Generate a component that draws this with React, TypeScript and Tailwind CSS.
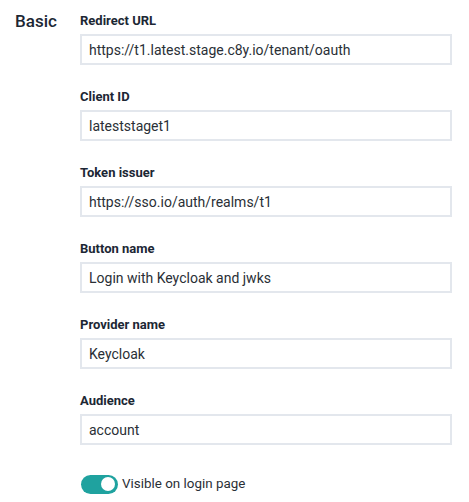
import { useState } from "react";

const fields = [
  { label: "Redirect URL", value: "https://t1.latest.stage.c8y.io/tenant/oauth" },
  { label: "Client ID", value: "lateststaget1" },
  { label: "Token issuer", value: "https://sso.io/auth/realms/t1" },
  { label: "Button name", value: "Login with Keycloak and jwks" },
  { label: "Provider name", value: "Keycloak" },
  { label: "Audience", value: "account" },
];

export default function App() {
  const [visible, setVisible] = useState(true);

  return (
    <div className="flex bg-white min-h-[502px] w-[469px] text-[#1c2734] font-['Roboto',sans-serif]">
      {/* Section title */}
      <div className="w-[80px] pl-[15px] pt-[11px]">
        <h2 className="text-[17px] leading-[20px] font-medium">Basic</h2>
      </div>

      {/* Fields */}
      <div className="w-[372px] pt-[13px]">
        {fields.map((f) => (
          <div key={f.label} className="mb-[24px]">
            <label className="block text-[13px] leading-[16px] font-bold mb-[5px]">{f.label}</label>
            <input
              type="text"
              defaultValue={f.value}
              className="block w-full h-[31px] px-[7px] border-2 border-[#e3e7ed] bg-white text-[14px] text-[#2a2f36] outline-none"
            />
          </div>
        ))}

        <label className="flex items-center gap-[4px] pl-[1px] pt-[5px] cursor-pointer">
          <button
            type="button"
            onClick={() => setVisible(!visible)}
            className={`relative w-[37px] h-[19px] rounded-full transition-colors ${visible ? "bg-[#1fa29f]" : "bg-[#c6ccd4]"}`}
          >
            <span
              className={`absolute top-[2.5px] w-[14px] h-[14px] rounded-full bg-white transition-all ${visible ? "left-[20px]" : "left-[3px]"}`}
            />
          </button>
          <span className="text-[13.4px] text-[#2a2f36]">Visible on login page</span>
        </label>
      </div>
    </div>
  );
}
